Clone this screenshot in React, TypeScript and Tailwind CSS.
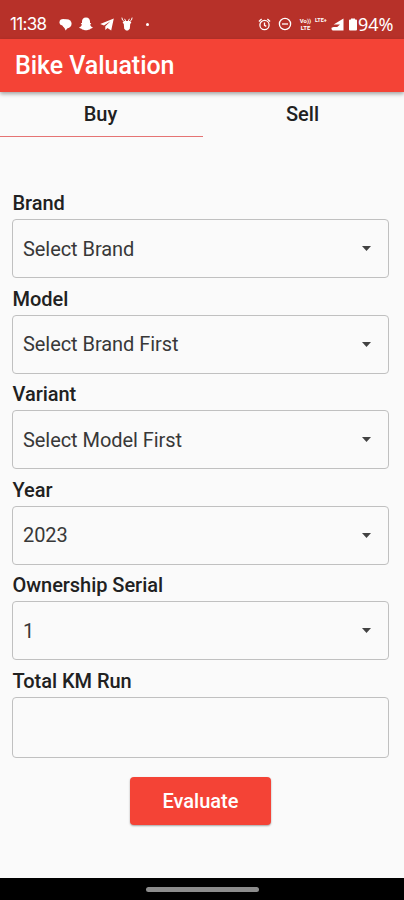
import { type ReactNode, useState } from "react";

type Field = {
  label: string;
  value: string;
};

const fields: Field[] = [
  { label: "Brand", value: "Select Brand" },
  { label: "Model", value: "Select Brand First" },
  { label: "Variant", value: "Select Model First" },
  { label: "Year", value: "2023" },
  { label: "Ownership Serial", value: "1" },
];

function StatusBar() {
  return (
    <div className="flex h-[39px] shrink-0 items-center bg-[#b73129] pt-[9px] pr-[9px] pl-[10px] text-white">
      <span className="w-[37px] whitespace-nowrap font-['Inter',sans-serif] text-[17px] leading-none tracking-[-0.7px]">
        11:38
      </span>
      <svg className="ml-[12px] h-[13px] w-[13px]" viewBox="0 0 13 13" fill="currentColor">
        <ellipse cx="4.4" cy="4.2" rx="3.9" ry="3.3" />
        <ellipse cx="7.8" cy="5.8" rx="4.8" ry="4.5" />
        <path d="M4.6 8L6.6 12.6L9.4 9Z" />
      </svg>
      <svg className="ml-[7px] h-[14px] w-[14px]" viewBox="0 0 14 14" fill="currentColor">
        <path d="M7 .6C9.8.6 11 2.5 11 4.5V6L12.2 6.1L11.2 7.7C11.6 9.1 12.6 9.9 13.8 10.3C13.4 11.5 12.4 11.5 11.5 11.7L10.9 12.5C9.3 12.2 8.8 13.3 7 13.3S4.7 12.2 3.1 12.5L2.5 11.7C1.6 11.5.6 11.5.2 10.3C1.4 9.9 2.4 9.1 2.8 7.7L1.8 6.1L3 6V4.5C3 2.5 4.2.6 7 .6Z" />
      </svg>
      <svg className="ml-[7px] h-[13px] w-[14px]" viewBox="0 0 14 13" fill="currentColor">
        <path d="M13.8.6L.2 6L4 7.6L10.5 3.3L5.3 8.3V12L7.5 9.9L11.2 12.6Z" />
      </svg>
      <svg className="ml-[7px] h-[14px] w-[12px]" viewBox="0 0 12 14" fill="currentColor">
        <path
          d="M.9.6Q.9 3.6 3.4 4.6M11.1.6Q11.1 3.6 8.6 4.6M3.6 1.8L4.6 4M8.4 1.8L7.4 4"
          fill="none"
          stroke="currentColor"
          strokeWidth="1"
        />
        <path d="M3.2 4H8.8L10.4 5.4L9.2 6.9L8.8 11.7L7 13.5H5L3.2 11.7L2.8 6.9L1.6 5.4Z" />
      </svg>
      <span className="ml-[13px] h-[3px] w-[3px] rounded-full bg-white" />

      <div className="ml-auto flex items-center">
        <svg className="h-[13px] w-[13px]" viewBox="0 0 13 13" fill="none" stroke="currentColor">
          <circle cx="6.5" cy="7" r="4.6" strokeWidth="1.3" />
          <path d="M.9 3.4L3.6 1.1M12.1 3.4L9.4 1.1M6.5 4.4V7.4L8.3 8.4" strokeWidth="1.3" />
        </svg>
        <svg className="ml-[7px] h-[14px] w-[14px]" viewBox="0 0 14 14" fill="none" stroke="currentColor" strokeWidth="1.3">
          <circle cx="7" cy="7" r="5.6" />
          <path d="M4 7H10" />
        </svg>
        <span className="ml-[6px] flex w-[15px] flex-col items-center font-['Roboto',sans-serif] text-[6px] font-bold leading-[7px]">
          <span>Vo))</span>
          <span>LTE</span>
        </span>
        <span className="mb-[8px] ml-[2px] w-[14px] whitespace-nowrap font-['Roboto',sans-serif] text-[5.5px] font-bold leading-[6px]">
          LTE+
        </span>
        <svg className="ml-[2px] h-[13px] w-[13px]" viewBox="0 0 13 13" fill="currentColor">
          <path d="M12.5.5V12.5H1.6L.5 11.2V9.8L2.6 9.1H6.2L9 6.4H2.6Z" />
        </svg>
        <svg className="ml-[4px] h-[13px] w-[10px]" viewBox="0 0 10 13" fill="currentColor">
          <path d="M3 .4H7V1.6H8Q9 1.6 9 2.6V11.6Q9 12.6 8 12.6H2Q1 12.6 1 11.6V2.6Q1 1.6 2 1.6H3Z" />
        </svg>
        <span className="w-[37px] whitespace-nowrap font-['Noto_Sans',sans-serif] text-[18px] leading-none">
          94%
        </span>
      </div>
    </div>
  );
}

function Tab({ active, onClick, children }: { active: boolean; onClick: () => void; children: ReactNode }) {
  return (
    <button
      type="button"
      onClick={onClick}
      className={`flex h-[45px] items-start justify-center border-b pt-2 pr-[2px] text-xl font-medium leading-[28px] ${
        active ? "border-[#e57373]" : "border-transparent"
      }`}
    >
      {children}
    </button>
  );
}

function SelectField({ label, value }: Field) {
  return (
    <div className="flex h-[95.6px] flex-col">
      <span className="h-[29px] pl-[0.5px] text-xl font-medium leading-[26px] tracking-[-0.04px]">{label}</span>
      <button
        type="button"
        className="flex h-[59px] items-center justify-between rounded-[4px] border border-[#c0c0c0] pr-[17px] pl-[10px] text-left text-xl tracking-[-0.06px] text-[#383838]"
      >
        <span>{value}</span>
        <svg className="h-[5px] w-[9px]" viewBox="0 0 9 5" fill="#424242">
          <path d="M0 0H9L4.5 5Z" />
        </svg>
      </button>
    </div>
  );
}

export default function App() {
  const [tab, setTab] = useState("Buy");

  return (
    <div className="flex h-[900px] w-[404px] flex-col bg-[#fafafa] font-['Roboto',sans-serif] text-[#212121]">
      <StatusBar />
      <header className="z-10 flex h-[53px] shrink-0 items-center bg-[#f44336] pl-[15px] shadow-[0_2px_4px_rgba(0,0,0,0.35)]">
        <h1 className="text-[25px] font-medium tracking-[-0.05px] text-white">Bike Valuation</h1>
      </header>
      <nav className="grid grid-cols-[203px_201px]">
        {["Buy", "Sell"].map((name) => (
          <Tab key={name} active={tab === name} onClick={() => setTab(name)}>
            {name}
          </Tab>
        ))}
      </nav>

      <main className="flex flex-1 flex-col pt-[53px] pr-[15px] pl-[12px]">
        {fields.map((field) => (
          <SelectField key={field.label} {...field} />
        ))}
        <label className="flex flex-col">
          <span className="h-[29px] pl-[0.5px] text-xl font-medium leading-[26px] tracking-[-0.04px]">Total KM Run</span>
          <input className="h-[61px] rounded-[4px] border border-[#c0c0c0] px-[10px] text-xl outline-none" />
        </label>
        <button
          type="button"
          className="mt-[19px] ml-[118px] h-[48px] w-[141px] rounded-[4px] bg-[#f44336] text-xl font-medium text-white shadow-[0_1px_2px_rgba(0,0,0,0.35)]"
        >
          Evaluate
        </button>
      </main>

      <footer className="flex h-[22px] shrink-0 items-center justify-center bg-black">
        <span className="h-[5px] w-[113px] rounded-full bg-[#8c8c8c]" />
      </footer>
    </div>
  );
}
